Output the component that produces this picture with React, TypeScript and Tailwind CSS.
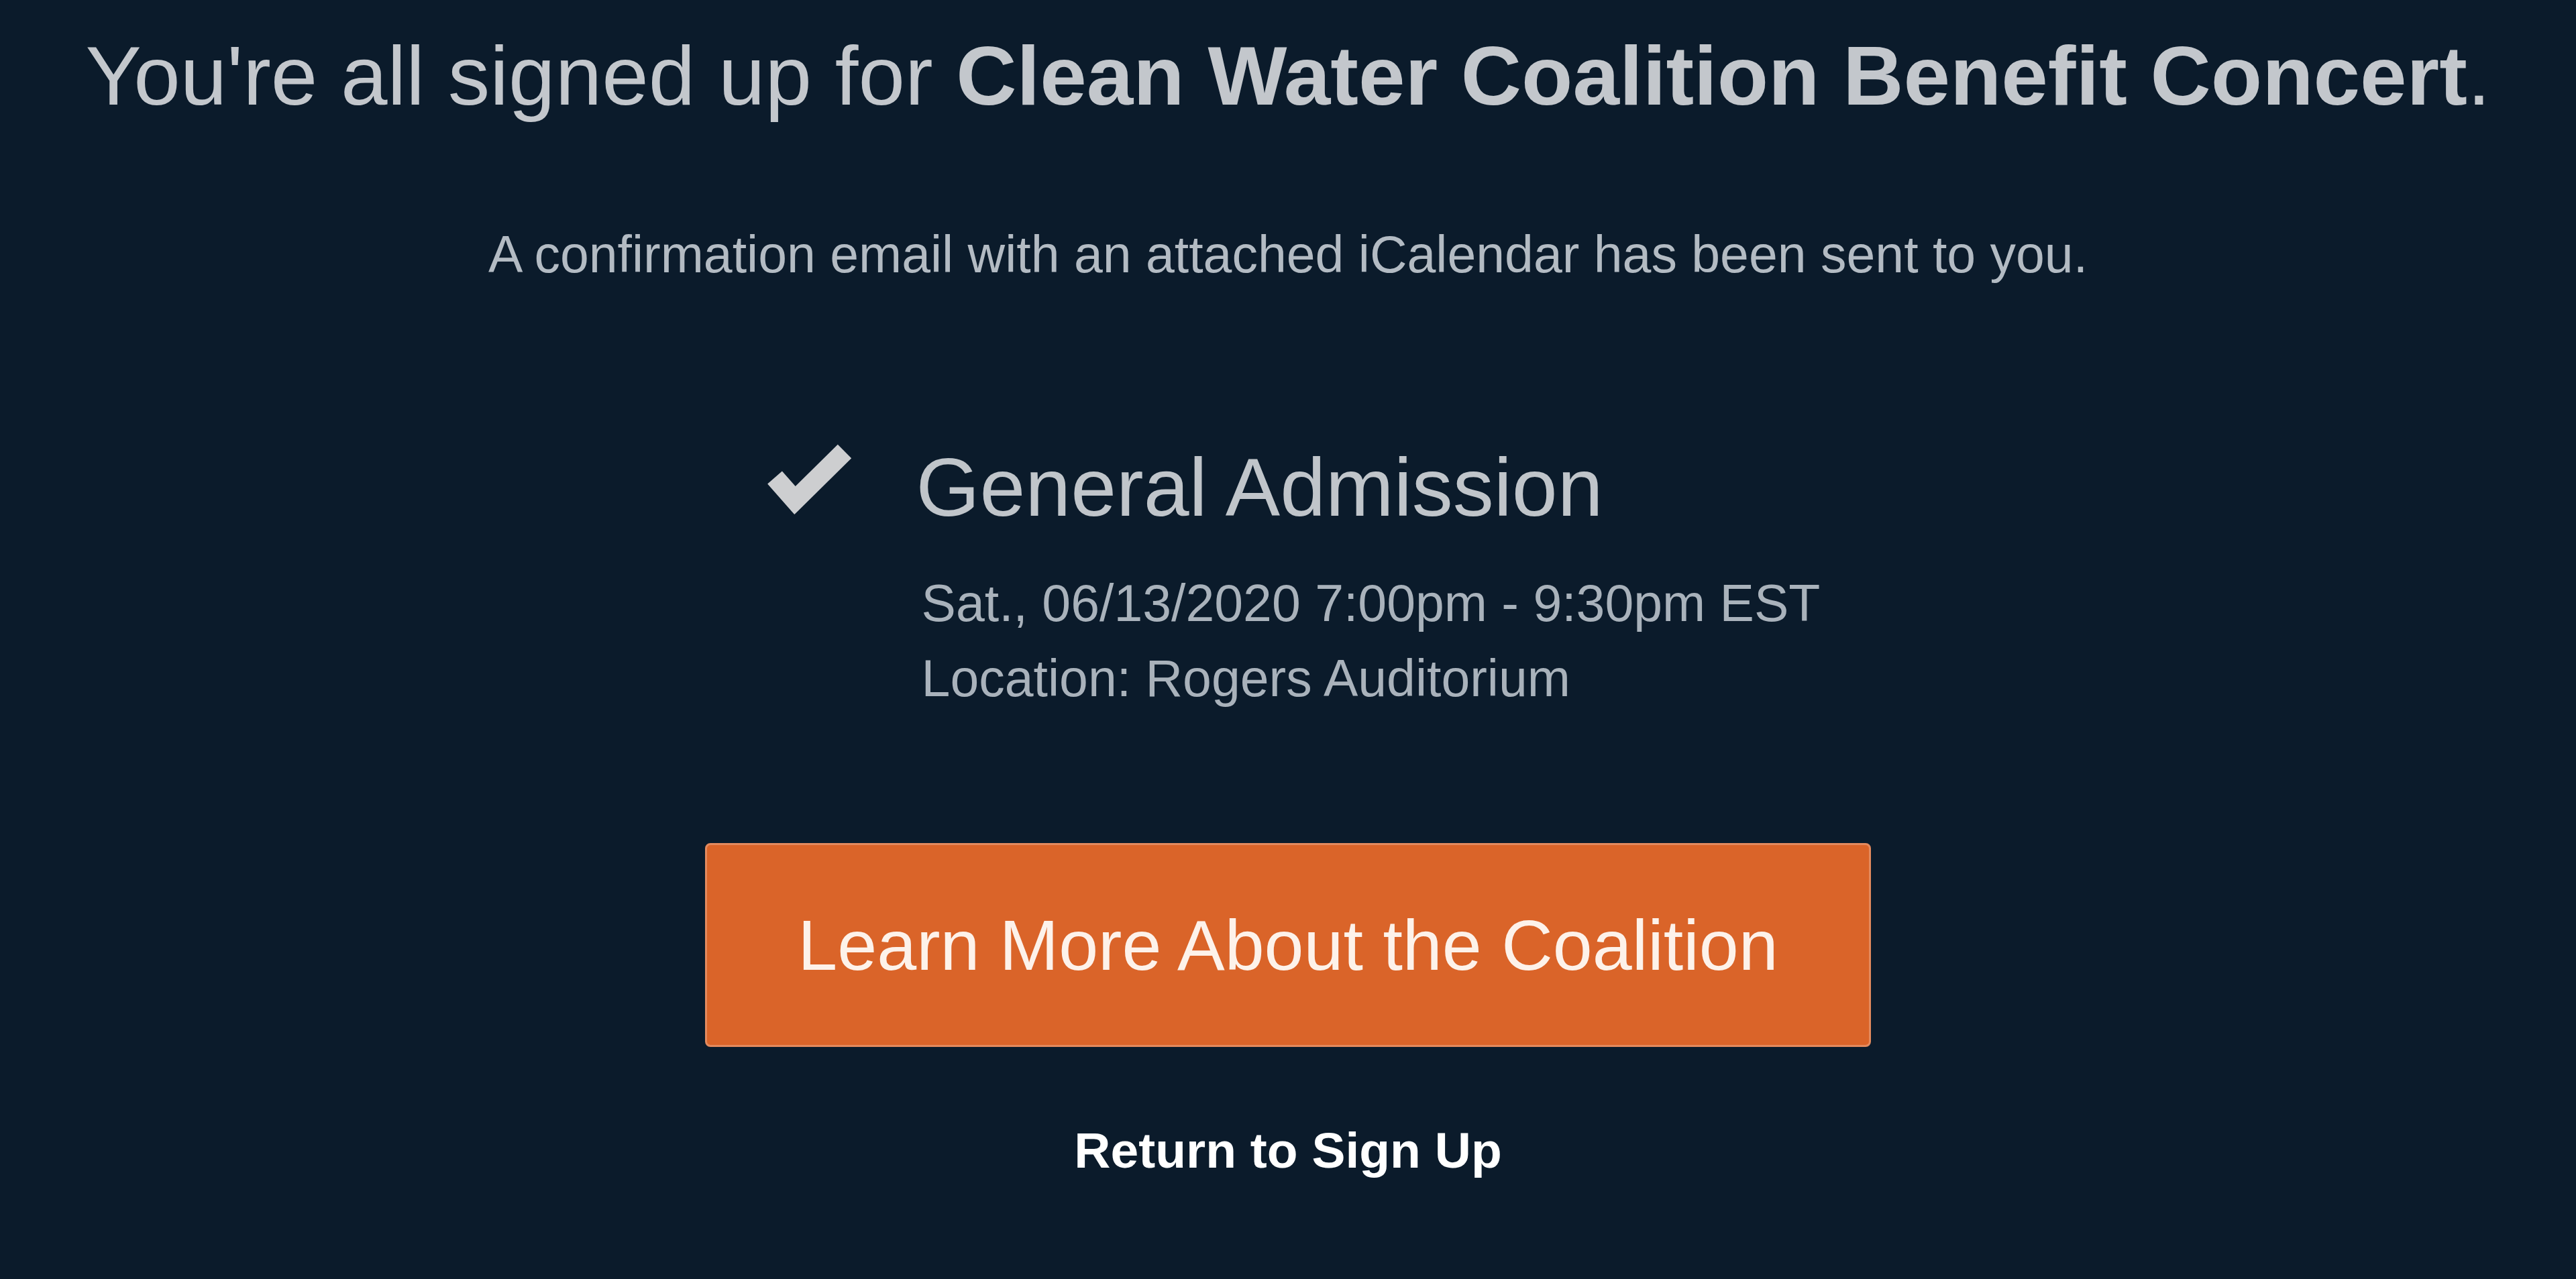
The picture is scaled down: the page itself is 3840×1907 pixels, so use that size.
import React from "react";

export default function App() {
  return (
    <div className="min-h-[1907px] w-full bg-[#0b1b2b] flex flex-col items-center pt-[50px] font-['Liberation_Sans',Arial,sans-serif]">
      <h1 className="text-[125px] leading-none text-[#c3c7cc] font-normal whitespace-nowrap">
        You're all signed up for <span className="font-bold">Clean Water Coalition Benefit Concert</span>.
      </h1>
      <p className="mt-[166px] text-[77px] leading-none text-[#b3bbc3] whitespace-nowrap">
        A confirmation email with an attached iCalendar has been sent to you.
      </p>

      <div className="mt-[248px] ml-[18px] flex items-start">
        <svg
          width="140"
          height="120"
          viewBox="0 0 140 120"
          className="mt-[-13px] ml-[-10px] shrink-0"
        >
          <polyline
            points="20,59 50,93 124,20"
            fill="none"
            stroke="#cdced0"
            strokeWidth="29"
            strokeLinejoin="miter"
          />
        </svg>
        <div className="ml-[91px] flex flex-col">
          <div className="text-[122px] leading-none text-[#c0c5ca] whitespace-nowrap">General Admission</div>
          <div className="mt-[55px] pl-[8px] text-[77px] leading-[112px] text-[#a9b2bb] whitespace-nowrap">
            <div>Sat., 06/13/2020 7:00pm - 9:30pm EST</div>
            <div>Location: Rogers Auditorium</div>
          </div>
        </div>
      </div>

      <button className="mt-[190px] w-[1738px] h-[304px] rounded-[8px] bg-[#da6429] border-[3px] border-[#e38a5e] flex items-center justify-center">
        <span className="text-[106px] leading-none text-[#fdf2ea] whitespace-nowrap">Learn More About the Coalition</span>
      </button>

      <a className="mt-[117px] text-[75px] leading-none font-bold text-white whitespace-nowrap cursor-pointer">
        Return to Sign Up
      </a>
    </div>
  );
}
